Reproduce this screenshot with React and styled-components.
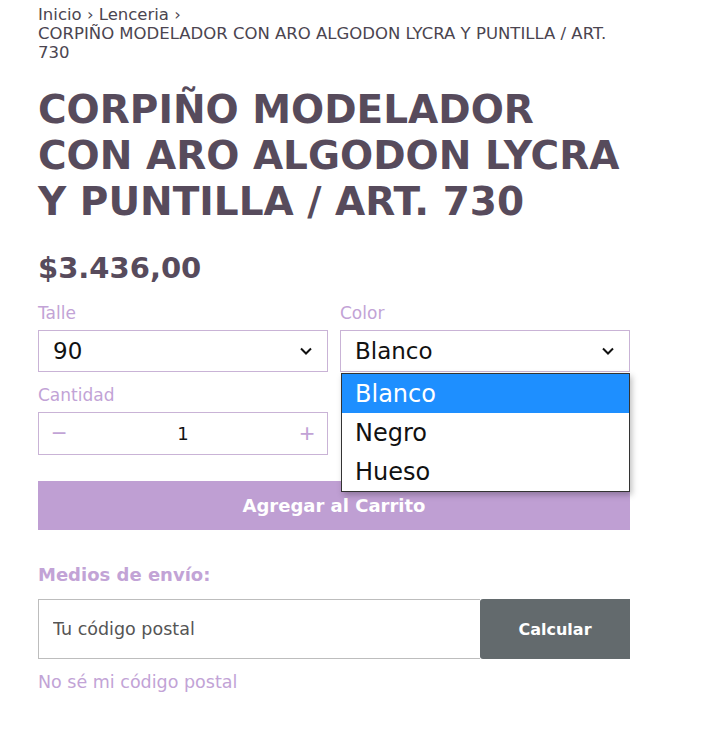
import React, { useState } from "react";
import styled, { createGlobalStyle } from "styled-components";

const GlobalStyle = createGlobalStyle`
  body {
    margin: 0;
    background: #fff;
    font-family: "DejaVu Sans", "Open Sans", sans-serif;
  }
`;

const sizes = ["85", "90", "95", "100"];
const colors = ["Blanco", "Negro", "Hueso"];

function Chevron() {
  return (
    <svg width="14" height="14" viewBox="0 0 14 14">
      <path d="M2 4.5 L7 9.5 L12 4.5" fill="none" stroke="#111" strokeWidth="2" />
    </svg>
  );
}

function App() {
  const [qty, setQty] = useState(1);

  return (
    <Page>
      <GlobalStyle />
      <Breadcrumb>
        <span>Inicio › Lenceria ›</span>
        <span>CORPIÑO MODELADOR CON ARO ALGODON LYCRA Y PUNTILLA / ART. 730</span>
      </Breadcrumb>

      <Title>CORPIÑO MODELADOR CON ARO ALGODON LYCRA Y PUNTILLA / ART. 730</Title>
      <Price>$3.436,00</Price>

      <FormGrid>
        <Field>
          <Label>Talle</Label>
          <SelectBox>
            <span>{sizes[1]}</span>
            <Chevron />
          </SelectBox>
        </Field>
        <Field>
          <Label>Color</Label>
          <SelectBox>
            <span>{colors[0]}</span>
            <Chevron />
          </SelectBox>
          <OptionList>
            {colors.map((c, i) => (
              <Option key={c} $active={i === 0}>
                {c}
              </Option>
            ))}
          </OptionList>
        </Field>
        <Field>
          <Label>Cantidad</Label>
          <QtyBox>
            <QtyBtn onClick={() => setQty(Math.max(1, qty - 1))}>−</QtyBtn>
            <QtyValue>{qty}</QtyValue>
            <QtyBtn onClick={() => setQty(qty + 1)}>+</QtyBtn>
          </QtyBox>
        </Field>
      </FormGrid>

      <CartButton>Agregar al Carrito</CartButton>

      <ShippingTitle>Medios de envío:</ShippingTitle>
      <ZipRow>
        <ZipInput placeholder="Tu código postal" />
        <CalcButton>Calcular</CalcButton>
      </ZipRow>
      <ZipLink>No sé mi código postal</ZipLink>
    </Page>
  );
}

export default App;

const Page = styled.div`
  width: 592px;
  padding: 5px 38px 40px;
`;

const Breadcrumb = styled.div`
  font-size: 16.5px;
  line-height: 19px;
  color: #4b4550;

  span {
    display: block;
  }
`;

const Title = styled.h1`
  margin: 25px 0 0;
  font-family: "DejaVu Sans", sans-serif;
  font-weight: 700;
  font-size: 39px;
  line-height: 46px;
  color: #574b5c;
`;

const Price = styled.div`
  margin-top: 23px;
  font-size: 29px;
  font-weight: 700;
  color: #574b5c;
  line-height: 40px;
`;

const FormGrid = styled.div`
  margin-top: 13px;
  display: grid;
  grid-template-columns: 290px 290px;
  column-gap: 12px;
  row-gap: 11px;
`;

const Field = styled.div`
  position: relative;
  display: flex;
  flex-direction: column;
`;

const Label = styled.div`
  font-size: 17px;
  line-height: 24px;
  color: #c2a3d6;
  margin-bottom: 5px;
`;

const SelectBox = styled.div`
  box-sizing: border-box;
  height: 42px;
  border: 1px solid #c9b3d6;
  display: flex;
  align-items: center;
  justify-content: space-between;
  padding: 0 14px;
  font-size: 23px;
  color: #111;
  background: #fff;
`;

const OptionList = styled.ul`
  position: absolute;
  top: 72px;
  left: 1px;
  right: 0;
  margin: 0;
  padding: 0;
  list-style: none;
  background: #fff;
  border: 1px solid #333;
  box-shadow: 2px 3px 6px rgba(0, 0, 0, 0.25);
  z-index: 5;
`;

const Option = styled.li`
  height: 39px;
  display: flex;
  align-items: center;
  padding: 0 13px;
  font-size: 24px;
  color: ${(p) => (p.$active ? "#fff" : "#111")};
  background: ${(p) => (p.$active ? "#1e8fff" : "#fff")};
`;

const QtyBox = styled.div`
  box-sizing: border-box;
  height: 43px;
  border: 1px solid #c9b3d6;
  display: flex;
  align-items: center;
  justify-content: space-between;
  padding: 0 10px;
`;

const QtyBtn = styled.button`
  border: none;
  background: none;
  padding: 0;
  font-size: 26px;
  color: #c2a3d6;
  cursor: pointer;
  width: 20px;
`;

const QtyValue = styled.span`
  font-size: 18px;
  color: #111;
`;

const CartButton = styled.button`
  display: block;
  width: 100%;
  margin-top: 26px;
  height: 49px;
  border: none;
  background: #bf9fd3;
  color: #fff;
  font-family: "DejaVu Sans", sans-serif;
  font-size: 18px;
  font-weight: 700;
  cursor: pointer;
`;

const ShippingTitle = styled.div`
  margin-top: 33px;
  font-size: 18px;
  font-weight: 700;
  color: #c2a3d6;
  line-height: 24px;
`;

const ZipRow = styled.div`
  margin-top: 12px;
  display: flex;
  height: 60px;
`;

const ZipInput = styled.input`
  flex: 1;
  box-sizing: border-box;
  height: 60px;
  border: 1px solid #bdbdbd;
  border-right: none;
  padding: 0 14px;
  font-family: "DejaVu Sans", sans-serif;
  font-size: 17.5px;
  color: #333;
  outline: none;

  &::placeholder {
    color: #555;
  }
`;

const CalcButton = styled.button`
  width: 150px;
  border: none;
  border-radius: 3px 0 0 3px;
  background: #636a6d;
  color: #fff;
  font-family: "DejaVu Sans", sans-serif;
  font-size: 16px;
  font-weight: 700;
`;

const ZipLink = styled.div`
  margin-top: 11px;
  font-size: 17.5px;
  line-height: 24px;
  color: #c2a3d6;
`;
